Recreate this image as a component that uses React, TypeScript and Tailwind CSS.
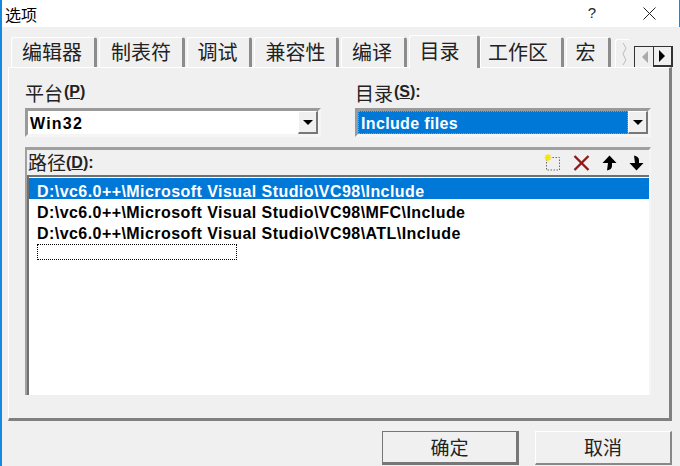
const cjk = "font-['Noto_Sans_CJK_SC','Liberation_Sans',sans-serif]";

function Tab({ label, w, selected }: { label: string; w: string; selected?: boolean }) {
  return (
    <div
      className={`${w} ${selected ? "h-[33px] -mb-px z-10 pb-[3px]" : "h-[30px] mr-[2px] pb-[1px]"} border-r-[3px] flex items-center justify-center shrink-0 bg-[#f0f0f0] border-t border-l border-t-white border-l-white border-r-[#8c8c8c] rounded-t-[3px] text-[20px] text-[#222]`}
    >
      {label}
    </div>
  );
}

function Combo({ label, hotkey, value, selected, w }: { label: string; hotkey: string; value: string; selected?: boolean; w: string }) {
  return (
    <div className={`${w} flex flex-col`}>
      <div className="h-[24px] flex items-center text-[19px] text-[#222] leading-none">
        {label}
        <span className="text-[16px] font-bold font-['Liberation_Sans'] ml-px">
          (<span className="underline">{hotkey}</span>){selected ? ":" : ""}
        </span>
      </div>
      <div className="mt-[4px] h-[29px] flex bg-white border-[3px] border-[#9a9a9a] border-r-[#f5f5f5] border-b-[#f5f5f5]">
        <div className={`flex-1 flex items-center pl-[2px] pt-[3px] text-[16px] font-['Liberation_Sans'] font-bold ${selected ? "tracking-[0.35px] bg-[#0078d7] text-white border border-dotted border-[#e08a30]" : "tracking-[1.2px] text-black"}`}>
          {value}
        </div>
        <div className="w-[20px] flex items-center justify-center bg-[#f0f0f0] border-t border-l border-white border-r-[2px] border-b-[2px] border-r-[#777] border-b-[#777]">
          <svg width="10" height="5" viewBox="0 0 10 5"><path d="M0 0 H10 L5 5 Z" fill="#000" /></svg>
        </div>
      </div>
    </div>
  );
}

function Btn({ label, def, w }: { label: string; def?: boolean; w: string }) {
  return (
    <div className={`${w} h-[34px] flex items-center justify-center bg-[#f0f0f0] text-[19px] text-[#222] border-t border-l ${def ? "border-[#777] border-r-[3px] border-b-[3px]" : "border-white border-r-[2px] border-b-[2px] border-r-[#888] border-b-[#888]"}`}>
      {label}
    </div>
  );
}

const row = "h-[21px] shrink-0 flex items-center pl-[8px] pt-[6px] text-[16px] tracking-[0.44px] font-bold font-['Liberation_Sans'] whitespace-nowrap";

export default function App() {
  return (
    <div className={`w-[680px] h-[466px] overflow-hidden flex flex-col bg-[#f0f0f0] border-l-2 border-l-[#1588e0] ${cjk}`}>
      <div className="h-[27px] shrink-0 bg-white flex items-center border-r border-r-[#1588e0] pl-[3px] text-[16px] text-black">
        <span>选项</span>
        <span className="ml-auto mr-[47px] font-['Liberation_Sans'] text-[15px] text-[#222]">?</span>
        <svg className="mr-[23px]" width="13" height="13" viewBox="0 0 13 13"><path d="M0.5 0.5 L12.5 12.5 M12.5 0.5 L0.5 12.5" stroke="#222" strokeWidth="1" fill="none" /></svg>
      </div>

      <div className="h-[40px] shrink-0 flex items-end pl-[9px] relative">
        <Tab label="编辑器" w="w-[86px] pr-[2px]" />
        <Tab label="制表符" w="w-[86px]" />
        <Tab label="调试" w="w-[65px] pr-[2px]" />
        <Tab label="兼容性" w="w-[85px]" />
        <Tab label="编译" w="w-[66px] pr-[2px]" />
        <Tab label="目录" w="w-[71px] pr-[8px]" selected />
        <Tab label="工作区" w="w-[84px] pr-[6px]" />
        <Tab label="宏" w="w-[45px] pr-[4px]" />
        <div className="w-[14px] h-[28px] ml-[2px] shrink-0 border-t border-l border-white rounded-tl-[3px] flex items-center justify-end">
          <svg width="8" height="24" viewBox="0 0 8 24"><path d="M2 1 L5 6 L2 12 L5 18 L2 23" stroke="#bbb" fill="none" /></svg>
        </div>
        <div className="absolute left-[632px] top-[19px] w-[39px] h-[21px] flex bg-[#f0f0f0] border-t border-l border-[#333] z-20">
          <div className="w-[19px] flex items-center justify-center border-r border-[#333]">
            <svg width="7" height="12" viewBox="0 0 7 12"><path d="M7 0 V12 L1 6 Z" fill="#aaa" /></svg>
          </div>
          <div className="flex-1 flex items-center justify-center border-r-[2px] border-b-[2px] border-[#333]">
            <svg width="7" height="12" viewBox="0 0 7 12"><path d="M0 0 V12 L6 6 Z" fill="#000" /></svg>
          </div>
        </div>
      </div>

      <div className="ml-[6px] w-[664px] h-[354px] shrink-0 flex flex-col border-t border-l border-t-white border-l-white border-r-[3px] border-b-[3px] border-r-[#808080] border-b-[#808080] px-[16px] pt-[12px]">
        <div className="flex justify-between w-[626px]">
          <Combo w="w-[296px]" label="平台" hotkey="P" value="Win32" />
          <Combo w="w-[296px]" label="目录" hotkey="S" value="Include files" selected />
        </div>
        <div className="mt-[10px] w-[626px] h-[248px] flex flex-col border-t-[3px] border-l-[2px] border-t-[#a0a0a0] border-l-[#a0a0a0] border-r-[2px] border-r-[#f5f5f5]">
          <div className="h-[25px] shrink-0 flex items-center">
            <span className="text-[19px] text-[#222] ml-[1px]">路径</span>
            <span className="text-[16px] font-bold font-['Liberation_Sans'] text-[#222]">(<span className="underline">D</span>):</span>
            <div className="ml-auto mr-[5px] flex items-center gap-[12px]">
              <svg width="17" height="17" viewBox="0 0 17 17">
                <rect x="2.5" y="3.5" width="13" height="12.5" fill="none" stroke="#666" strokeDasharray="1.5 1.5" />
                <path d="M4 0 V7.5 M0.5 3.5 H7.5 M1.5 1 L6.5 6 M6.5 1 L1.5 6" stroke="#f5e800" strokeWidth="1.5" />
              </svg>
              <svg width="17" height="16" viewBox="0 0 17 16"><path d="M1.5 1 L15.5 15 M15.5 1 L1.5 15" stroke="#8f1a1a" strokeWidth="2.4" /></svg>
              <svg width="15" height="16" viewBox="0 0 15 16"><path d="M7.5 0.5 L14.5 8 H10 V11 Q10 14.5 5 15.5 L6 8 H0.5 Z" fill="#000" /></svg>
              <svg width="15" height="16" viewBox="0 0 15 16"><path d="M7.5 15.5 L14.5 8 H10 V5 Q10 1.5 5 0.5 L6 8 H0.5 Z" fill="#000" /></svg>
            </div>
          </div>
          <div className="flex-1 bg-white border-t-[2px] border-l-[2px] border-[#707070] pt-[1px] flex flex-col">
            <div className={`${row} bg-[#0078d7] text-white`}>D:\vc6.0++\Microsoft Visual Studio\VC98\Include</div>
            <div className={`${row} text-black`}>D:\vc6.0++\Microsoft Visual Studio\VC98\MFC\Include</div>
            <div className={`${row} text-black`}>D:\vc6.0++\Microsoft Visual Studio\VC98\ATL\Include</div>
            <div className="ml-[8px] mt-[3px] w-[200px] h-[16px] border border-dotted border-black" />
          </div>
        </div>
      </div>

      <div className="flex justify-end gap-[16px] mt-[10px] pr-[8px]">
        <Btn label="确定" w="w-[137px]" def />
        <Btn label="取消" w="w-[137px]" />
      </div>
    </div>
  );
}
